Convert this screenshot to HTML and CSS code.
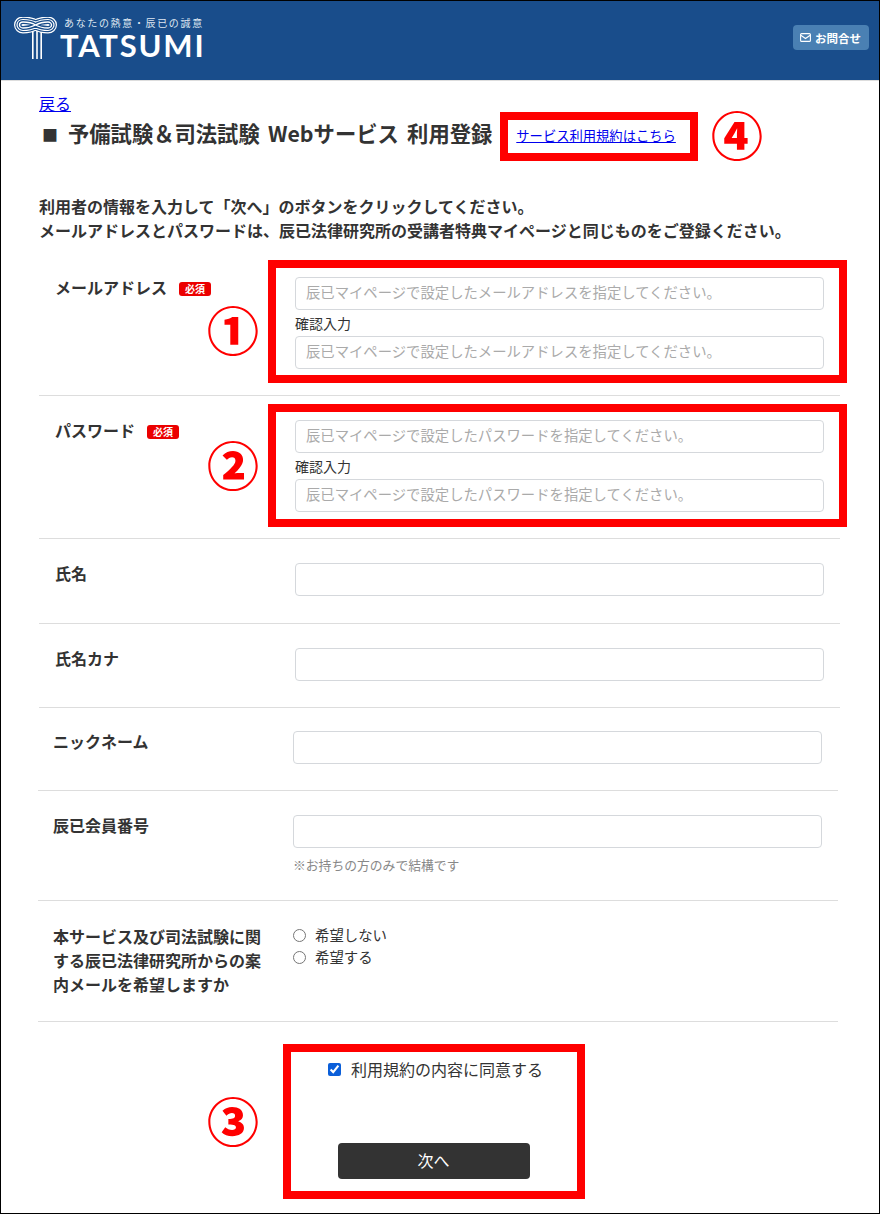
FILE: index.html
```html
<!DOCTYPE html>
<html lang="ja">
<head>
    <meta charset="UTF-8">
    <meta name="viewport" content="width=device-width, initial-scale=1.0">
    <title>予備試験＆司法試験 Webサービス 利用登録</title>
    <link rel="stylesheet" href="styles.css">
</head>
<body>
<div class="page">
    <header class="site-header">
        <a class="logo" href="#">
            <svg class="logo-mark" width="43" height="42" viewBox="0 0 43 42" fill="none">
                <g stroke="#fff" stroke-width="1.600">
                    <path d="M18.800 14v28M23 14v28M27.200 14v28"/>
                </g>
                <path d="M21.500 8C17 5 12 5 9 5 6.500 5 5.500 6.500 5.500 8S7 11 9 11c3 0 8-.5 12.500-3S30 5 34 5c2 0 3.500 1.500 3.500 3S36 11 34 11c-4 0-8-.5-12.500-3z" stroke="#fff" stroke-width="11"/>
                <path d="M21.500 8C17 5 12 5 9 5 6.500 5 5.500 6.500 5.500 8S7 11 9 11c3 0 8-.5 12.500-3S30 5 34 5c2 0 3.500 1.500 3.500 3S36 11 34 11c-4 0-8-.5-12.500-3z" stroke="#194d8b" stroke-width="8.600"/>
                <path d="M21.500 8C17 5 12 5 9 5 6.500 5 5.500 6.500 5.500 8S7 11 9 11c3 0 8-.5 12.500-3S30 5 34 5c2 0 3.500 1.500 3.500 3S36 11 34 11c-4 0-8-.5-12.500-3z" stroke="#fff" stroke-width="6.200"/>
                <path d="M21.500 8C17 5 12 5 9 5 6.500 5 5.500 6.500 5.500 8S7 11 9 11c3 0 8-.5 12.500-3S30 5 34 5c2 0 3.500 1.500 3.500 3S36 11 34 11c-4 0-8-.5-12.500-3z" stroke="#194d8b" stroke-width="3.800"/>
                <path d="M21.500 8C17 5 12 5 9 5 6.500 5 5.500 6.500 5.500 8S7 11 9 11c3 0 8-.5 12.500-3S30 5 34 5c2 0 3.500 1.500 3.500 3S36 11 34 11c-4 0-8-.5-12.500-3z" stroke="#fff" stroke-width="1.400"/>
            </svg>
            <span class="logo-text">
                <span class="logo-tag">あなたの熱意・辰已の誠意</span>
                <span class="logo-name">TATSUMI</span>
            </span>
        </a>
        <a class="contact-btn" href="#">
            <svg width="11" height="9" viewBox="0 0 11 9" fill="none" stroke="#fff" stroke-width="1.100">
                <rect x="0.600" y="0.600" width="9.800" height="7.800" rx="1"/>
                <path d="M0.800 2.200 5.500 5.500l4.700-3.300"/>
            </svg>
            お問合せ
        </a>
    </header>

    <main class="content">
        <a class="back-link" href="#">戻る</a>
        <div class="title-row">
            <h1 class="title"><span class="title-mark">■</span>予備試験＆司法試験 Webサービス 利用登録</h1>
            <a class="terms-link" href="#">サービス利用規約はこちら</a>
        </div>
        <p class="intro">利用者の情報を入力して「次へ」のボタンをクリックしてください。<br>メールアドレスとパスワードは、辰已法律研究所の受講者特典マイページと同じものをご登録ください。</p>

        <div class="row">
            <div class="label">メールアドレス<span class="required">必須</span></div>
            <div class="field">
                <input class="input" type="text" placeholder="辰已マイページで設定したメールアドレスを指定してください。">
                <div class="confirm">確認入力</div>
                <input class="input" type="text" placeholder="辰已マイページで設定したメールアドレスを指定してください。">
            </div>
        </div>
        <div class="row">
            <div class="label">パスワード<span class="required">必須</span></div>
            <div class="field">
                <input class="input" type="text" placeholder="辰已マイページで設定したパスワードを指定してください。">
                <div class="confirm">確認入力</div>
                <input class="input" type="text" placeholder="辰已マイページで設定したパスワードを指定してください。">
            </div>
        </div>
        <div class="row row-name">
            <div class="label">氏名</div>
            <div class="field"><input class="input" type="text"></div>
        </div>
        <div class="row">
            <div class="label">氏名カナ</div>
            <div class="field"><input class="input" type="text"></div>
        </div>
        <div class="row row-shift row-tight">
            <div class="label">ニックネーム</div>
            <div class="field"><input class="input" type="text"></div>
        </div>
        <div class="row row-shift row-member">
            <div class="label">辰已会員番号</div>
            <div class="field">
                <input class="input" type="text">
                <div class="note">※お持ちの方のみで結構です</div>
            </div>
        </div>
        <div class="row row-shift row-mail">
            <div class="label">本サービス及び司法試験に関する辰已法律研究所からの案内メールを希望しますか</div>
            <div class="field">
                <label class="radio"><input type="radio" name="mail">希望しない</label>
                <label class="radio"><input type="radio" name="mail">希望する</label>
            </div>
        </div>

        <div class="submit">
            <label class="agree"><input type="checkbox" checked>利用規約の内容に同意する</label>
            <button class="next-btn" type="button">次へ</button>
        </div>
    </main>

    <!-- 注釈（赤枠と番号） -->
    <div class="mark mark-1"></div>
    <div class="mark mark-2"></div>
    <div class="mark mark-3"></div>
    <div class="mark mark-4"></div>
    <span class="num num-1">①</span>
    <span class="num num-2">②</span>
    <span class="num num-3">③</span>
    <span class="num num-4">④</span>
</div>
</body>
</html>
```
FILE: styles.css
```css
* {
    box-sizing: border-box;
}
body {
    margin: 0;
    font-family: "Noto Sans CJK JP", "Noto Sans", sans-serif;
    color: #333;
    background-color: #fff;
}
.page {
    position: relative;
    height: 1214px;
    overflow: hidden;
    border: 1px solid #000;
}
.site-header {
    display: flex;
    justify-content: space-between;
    align-items: center;
    height: 80px;
    padding: 0 10px 6px 13px;
    background-color: #194d8b;
    border-bottom: 1px solid #ddd;
}
.logo {
    display: flex;
    gap: 2px;
    color: #fff;
    text-decoration: none;
}
.logo-mark {
    margin-top: 1px;
}
.logo-text {
    display: flex;
    flex-direction: column;
}
.logo-tag {
    margin-left: 5px;
    font-size: 10px;
    line-height: 14px;
    letter-spacing: 1.650px;
    white-space: nowrap;
    color: #dfe7f1;
}
.logo-name {
    margin-left: 1px;
    font-family: "Lato", sans-serif;
    font-size: 31px;
    font-weight: 700;
    line-height: 30px;
    letter-spacing: 1.800px;
}
.contact-btn {
    display: flex;
    align-items: center;
    gap: 4px;
    height: 25px;
    padding: 0 8px 0 7px;
    font-size: 11.500px;
    font-weight: 700;
    color: #fff;
    text-decoration: none;
    background-color: #4a80b3;
    border-radius: 4px;
}
.content {
    padding: 10px 39px 0 38px;
}
.back-link {
    display: block;
    width: 32px;
    font-size: 16px;
    line-height: 24px;
    color: #00e;
}
.title-row {
    display: flex;
    align-items: center;
    height: 30px;
    margin: 3px 0 0 3px;
}
.title {
    margin: 0;
    font-size: 21.300px;
    font-weight: 700;
    line-height: 30px;
    word-spacing: 3.500px;
    white-space: nowrap;
}
.title-mark {
    display: inline-block;
    width: 26px;
    font-size: 16px;
    vertical-align: 1px;
}
.terms-link {
    margin: 4px 0 0 24px;
    font-size: 13.300px;
    color: #00e;
    white-space: nowrap;
}
.intro {
    margin: 46px 0 11px;
    font-size: 16px;
    font-weight: 700;
    line-height: 24px;
    white-space: nowrap;
}
.row {
    display: flex;
    padding: 24px 16px 26px;
    border-bottom: 1px solid #ddd;
}
.row-name {
    padding-bottom: 27px;
}
.row-tight {
    padding-top: 23px;
}
.row-member {
    padding-bottom: 25px;
}
.row-shift {
    margin: 0 2px 0 -1px;
    padding-left: 15px;
}
.label {
    width: 240px;
    flex-shrink: 0;
    margin-top: -2px;
    padding-right: 32px;
    font-size: 16px;
    font-weight: 700;
    line-height: 24px;
}
.row-mail {
    padding-top: 23px;
    padding-bottom: 25px;
}
.row-mail .label {
    margin-top: 0;
    padding-right: 24px;
}
.required {
    display: inline-block;
    height: 14px;
    margin-left: 12px;
    padding: 0 6px;
    font-size: 10px;
    line-height: 14px;
    vertical-align: 1px;
    color: #fff;
    background-color: #eb0000;
    border-radius: 3px;
}
.field {
    flex: 1;
    min-width: 0;
}
.input {
    display: block;
    width: 100%;
    height: 33px;
    padding: 0 10px 4px;
    font-family: inherit;
    font-size: 14.350px;
    color: #333;
    background-color: #fff;
    border: 1px solid #d5d8dc;
    border-radius: 4px;
}
.input::placeholder {
    color: #aaa;
}
.confirm {
    margin: 3px 0 2px;
    font-size: 14px;
    line-height: 21px;
}
.note {
    margin-top: 7px;
    font-size: 12.800px;
    line-height: 20px;
    color: #888;
}
.radio {
    display: flex;
    align-items: center;
    font-size: 14.400px;
    line-height: 22px;
}
.radio input {
    margin: 0 9px 0 0;
    width: 13px;
    height: 13px;
}
.submit {
    display: flex;
    flex-direction: column;
    align-items: center;
    padding: 34px 12px 0 0;
}
.agree {
    display: flex;
    align-items: center;
    margin-left: 4px;
    font-size: 16px;
    line-height: 26px;
}
.agree input {
    margin: 0 10px 0 0;
    width: 13px;
    height: 13px;
    accent-color: #0b5fd9;
}
.next-btn {
    width: 192px;
    height: 36px;
    margin-top: 61px;
    padding: 0 0 3px;
    font-family: inherit;
    font-size: 16px;
    color: #fff;
    background-color: #333;
    border: none;
    border-radius: 4px;
}
.mark {
    position: absolute;
    border: 8px solid #f00;
}
.mark-1 {
    left: 267px;
    top: 259px;
    width: 579px;
    height: 123px;
}
.mark-2 {
    left: 267px;
    top: 403px;
    width: 579px;
    height: 123px;
}
.mark-3 {
    left: 282px;
    top: 1043px;
    width: 302px;
    height: 155px;
}
.mark-4 {
    left: 499px;
    top: 111px;
    width: 198px;
    height: 49px;
}
.num {
    position: absolute;
    width: 60px;
    font-size: 52px;
    font-weight: 900;
    line-height: 60px;
    text-align: center;
    color: #f00;
}
.num-1 {
    left: 202px;
    top: 298px;
}
.num-2 {
    left: 202px;
    top: 433px;
}
.num-3 {
    left: 202px;
    top: 1089px;
}
.num-4 {
    left: 706px;
    top: 103px;
}
```
